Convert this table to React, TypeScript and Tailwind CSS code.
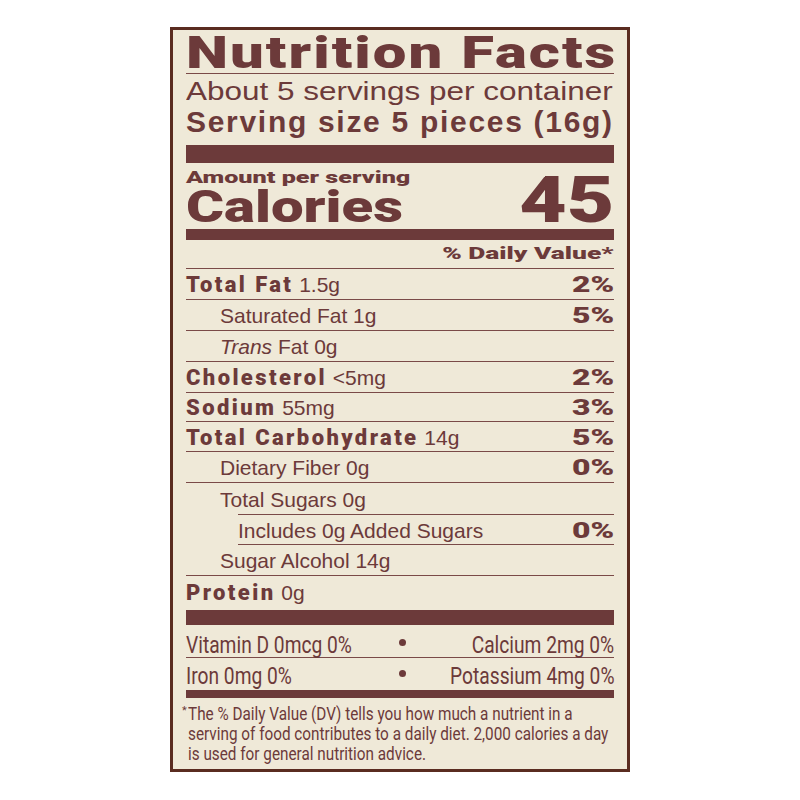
const line = "border-[#7a4a48]";
const row = `flex items-center justify-between border-b ${line} pt-[2px] text-[21px] leading-[26px]`;

const Label = ({ children }: { children: React.ReactNode }) => (
  <b className="font-black font-['Roboto',sans-serif] tracking-[2.4px] text-[22px]">{children}</b>
);

const Pct = ({ children }: { children: React.ReactNode }) => (
  <b className="inline-block origin-right scale-x-[1.45] font-black font-['Roboto',sans-serif] text-[22px]">
    {children}
  </b>
);

const Dot = () => <span className="w-[7px] h-[7px] shrink-0 ml-[4px] rounded-full bg-[#6c3a3a] mb-[11px]" />;

const App = () => {
  return (
    <div className="min-h-screen bg-white flex justify-center pt-[27px] font-['Liberation_Sans',Arial,sans-serif] text-[#6c3a3a]">
      <div className="w-[460px] h-[745px] border-[3px] border-[#5a2c20] bg-[#efe9d8] px-[13px]">
        <div className={`h-[44px] border-b ${line} pt-[2px]`}>
          <h1 className="inline-block origin-left scale-x-[1.36] tracking-[1.5px] font-['Roboto',sans-serif] text-[44px] leading-[42px] font-black whitespace-nowrap">
            Nutrition Facts
          </h1>
        </div>
        <div className="h-[32px] pt-[2px] text-[26px] leading-[30px]">
          <span className="inline-block origin-left scale-x-[1.21] whitespace-nowrap">About 5 servings per container</span>
        </div>
        <div className="h-[39px] text-[30px] leading-[32px] font-bold tracking-[1.7px] whitespace-nowrap">
          Serving size 5 pieces (16g)
        </div>
        <div className="h-[18px] bg-[#6c3a3a]" />

        <div className="pt-[4px] font-['Roboto',sans-serif] text-[17px] leading-[20px] font-black">
          <span className="inline-block origin-left scale-x-[1.48]">Amount per serving</span>
        </div>
        <div className="h-[42px] flex items-baseline justify-between font-['Roboto',sans-serif] font-black">
          <span className="inline-block origin-left scale-x-[1.32] text-[44px] leading-[28px]">Calories</span>
          <span className="inline-block origin-right scale-x-[1.28] text-[64px] leading-[28px]">45</span>
        </div>
        <div className="h-[11px] bg-[#6c3a3a]" />

        <div className={`h-[29px] border-b ${line} pt-[3px] text-right font-['Roboto',sans-serif] text-[17px] leading-[20px] font-black`}>
          <span className="inline-block origin-right scale-x-[1.55]">% Daily Value*</span>
        </div>

        <div className={`${row} h-[31px]`}>
          <span><Label>Total Fat</Label> 1.5g</span>
          <Pct>2%</Pct>
        </div>
        <div className={`${row} h-[31px]`}>
          <span className="pl-[34px]">Saturated Fat 1g</span>
          <Pct>5%</Pct>
        </div>
        <div className={`${row} h-[31px]`}>
          <span className="pl-[34px]"><i>Trans</i> Fat 0g</span>
        </div>
        <div className={`${row} h-[31px]`}>
          <span><Label>Cholesterol</Label> &lt;5mg</span>
          <Pct>2%</Pct>
        </div>
        <div className={`${row} h-[29px]`}>
          <span><Label>Sodium</Label> 55mg</span>
          <Pct>3%</Pct>
        </div>
        <div className={`${row} h-[30px]`}>
          <span><Label>Total Carbohydrate</Label> 14g</span>
          <Pct>5%</Pct>
        </div>
        <div className={`${row} h-[31px]`}>
          <span className="pl-[34px]">Dietary Fiber 0g</span>
          <Pct>0%</Pct>
        </div>
        <div className="flex items-center h-[31px] pt-[2px] text-[21px] leading-[26px]">
          <span className="pl-[34px]">Total Sugars 0g</span>
        </div>
        <div className={`ml-[52px] border-t ${line}`}>
          <div className={`${row} h-[30px]`}>
            <span>Includes 0g Added Sugars</span>
            <Pct>0%</Pct>
          </div>
        </div>
        <div className={`${row} h-[31px]`}>
          <span className="pl-[34px]">Sugar Alcohol 14g</span>
        </div>
        <div className="flex items-center h-[34px] text-[21px] leading-[26px]">
          <span><Label>Protein</Label> 0g</span>
        </div>
        <div className="h-[15px] bg-[#6c3a3a]" />

        <div className={`h-[33px] flex items-end border-b ${line} font-['Roboto',sans-serif] text-[24px] leading-[24px] whitespace-nowrap`}>
          <div className="flex-1">
            <span className="inline-block origin-left scale-x-[0.8]">Vitamin D 0mcg 0%</span>
          </div>
          <Dot />
          <div className="flex-1 text-right">
            <span className="inline-block origin-right scale-x-[0.8]">Calcium 2mg 0%</span>
          </div>
        </div>
        <div className="h-[32px] flex items-end pb-[2px] font-['Roboto',sans-serif] text-[24px] leading-[24px] whitespace-nowrap">
          <div className="flex-1">
            <span className="inline-block origin-left scale-x-[0.8]">Iron 0mg 0%</span>
          </div>
          <Dot />
          <div className="flex-1 text-right">
            <span className="inline-block origin-right scale-x-[0.8]">Potassium 4mg 0%</span>
          </div>
        </div>
        <div className="h-[8px] bg-[#6c3a3a]" />

        <div className="flex pt-[6px] -ml-[4px] font-['Roboto',sans-serif]">
          <span className="w-[6px] shrink-0 text-[11px] leading-[14px]">*</span>
          <p className="inline-block origin-left scale-x-[0.85] whitespace-nowrap text-[18px] leading-[20px]">
            The % Daily Value (DV) tells you how much a nutrient in a<br />
            serving of food contributes to a daily diet. 2,000 calories a day<br />
            is used for general nutrition advice.
          </p>
        </div>
      </div>
    </div>
  );
};

export default App;
